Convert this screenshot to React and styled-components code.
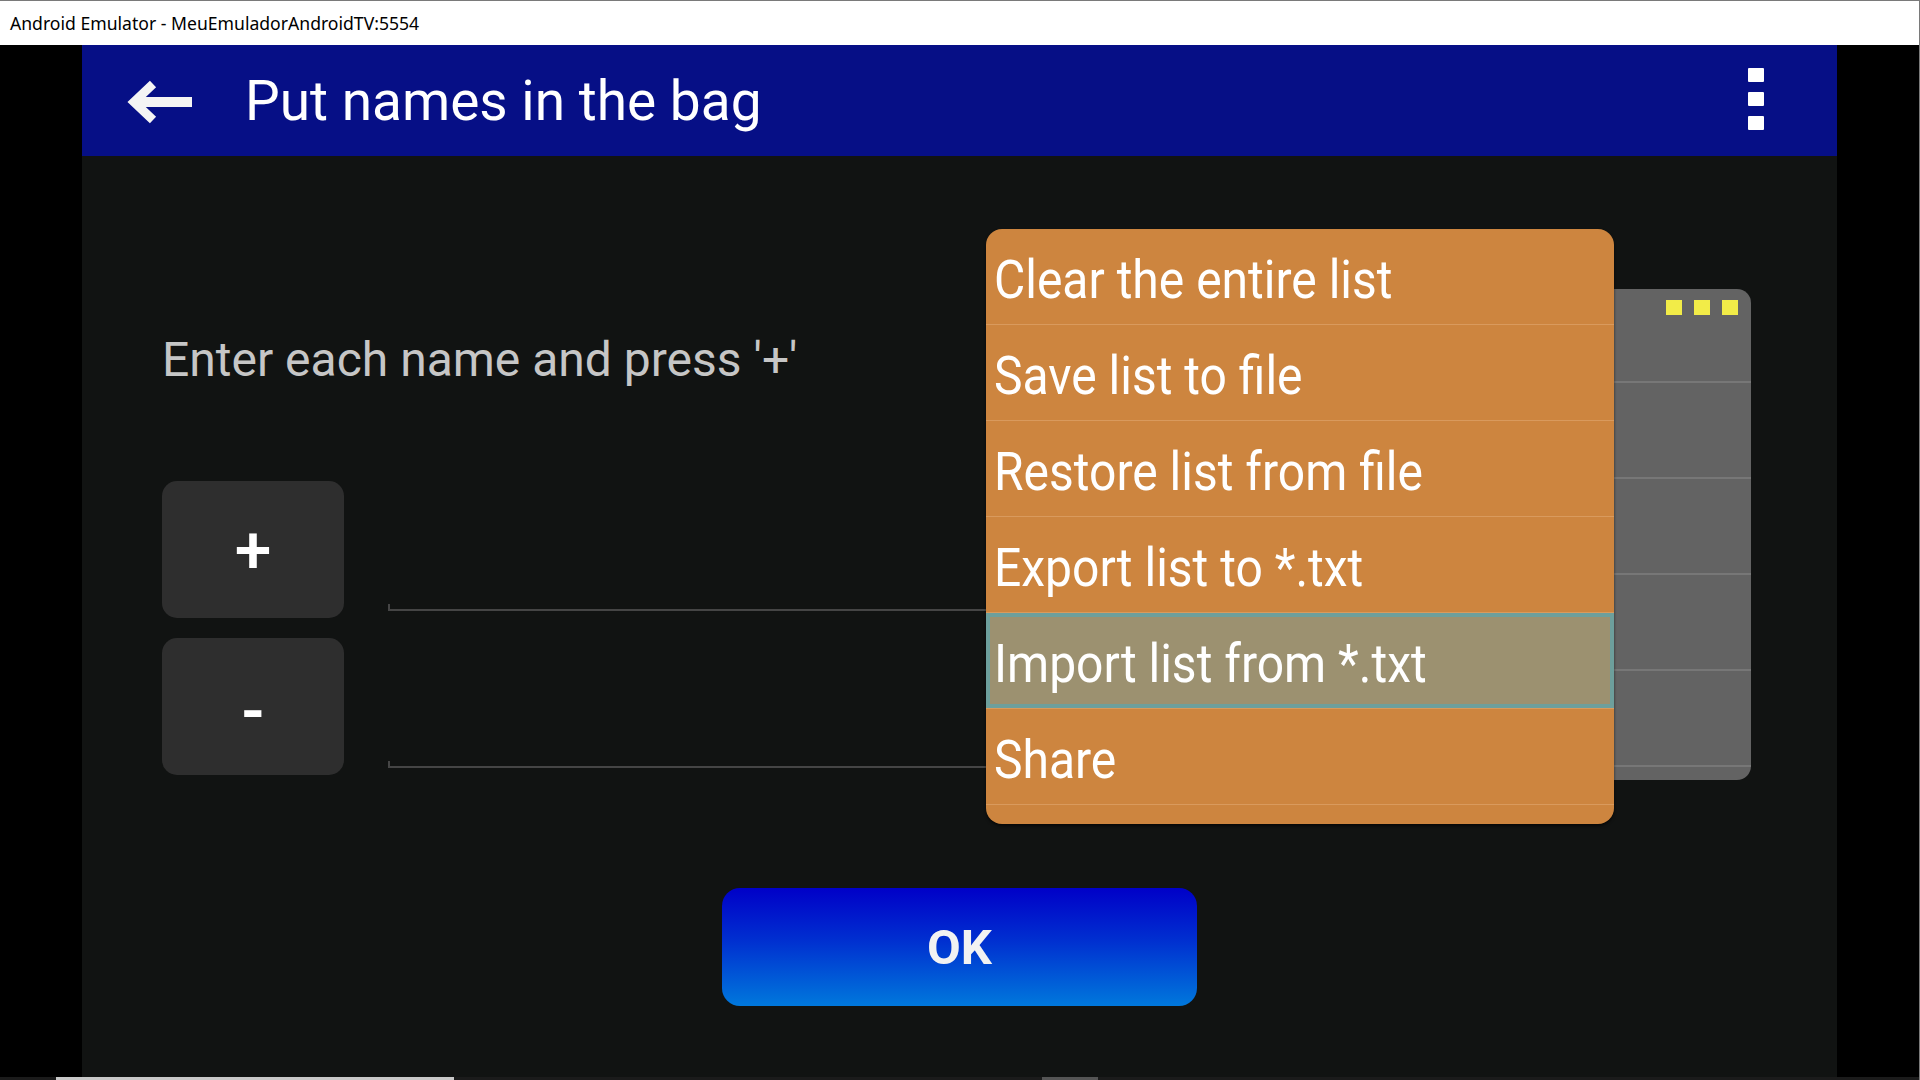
import React from "react";
import styled, { createGlobalStyle } from "styled-components";

const GlobalStyle = createGlobalStyle`
  html, body {
    margin: 0;
    padding: 0;
    background: #000;
  }
  body {
    font-family: Roboto, "Noto Sans", sans-serif;
  }
  * {
    box-sizing: border-box;
  }
`;

const menuItems = [
  "Clear the entire list",
  "Save list to file",
  "Restore list from file",
  "Export list to *.txt",
  "Import list from *.txt",
  "Share",
];

export default function App() {
  return (
    <>
      <GlobalStyle />
      <Window>
        <TitleBar>Android Emulator - MeuEmuladorAndroidTV:5554</TitleBar>
        <Desk>
          <Screen>
            <AppBar>
              <BackArrow width="65" height="44" viewBox="0 0 65 44">
                <polyline
                  points="26,4 7,22 26,40"
                  fill="none"
                  stroke="#f4f4f4"
                  strokeWidth="9"
                  strokeLinejoin="miter"
                />
                <line x1="8" y1="22" x2="65" y2="22" stroke="#f4f4f4" strokeWidth="10" />
              </BackArrow>
              <Title>Put names in the bag</Title>
              <Dots>
                <Dot />
                <Dot />
                <Dot />
              </Dots>
            </AppBar>
            <Content>
              <Prompt>Enter each name and press '+'</Prompt>
              <EntryRow>
                <ButtonCol>
                  <SquareButton>+</SquareButton>
                  <SquareButton $minus>-</SquareButton>
                </ButtonCol>
                <FieldCol>
                  <Field>
                    <Underline />
                  </Field>
                  <Field>
                    <Underline />
                  </Field>
                </FieldCol>
              </EntryRow>
              <OkButton>OK</OkButton>

              <BackPanel>
                <PanelRow>
                  <YellowDots>
                    <YellowDot />
                    <YellowDot />
                    <YellowDot />
                  </YellowDots>
                </PanelRow>
                <PanelRow />
                <PanelRow />
                <PanelRow />
                <PanelRow />
              </BackPanel>

              <Menu>
                {menuItems.map((item, i) => (
                  <MenuItem key={item} $active={i === 4}>
                    <ItemLabel>{item}</ItemLabel>
                  </MenuItem>
                ))}
              </Menu>
            </Content>
          </Screen>
        </Desk>
        <Strip>
          <StripPart $w={56} $c="#1b1b1b" />
          <StripPart $w={398} $c="#c9c9c9" />
          <StripPart $w={588} $c="#1b1b1b" />
          <StripPart $w={56} $c="#555555" />
        </Strip>
      </Window>
    </>
  );
}

const Window = styled.div`
  width: 1920px;
  height: 1080px;
  display: flex;
  flex-direction: column;
  border-top: 1px solid #7a7a7a;
  border-right: 1px solid #7a7a7a;
  background: #000;
  overflow: hidden;
`;

const TitleBar = styled.div`
  height: 44px;
  flex-shrink: 0;
  background: #fff;
  display: flex;
  align-items: center;
  padding-left: 10px;
  font-family: "Noto Sans", "Open Sans", sans-serif;
  font-size: 17.6px;
  color: #000;
`;

const Desk = styled.div`
  flex: 1;
  display: flex;
  padding-left: 82px;
  min-height: 0;
`;

const Screen = styled.div`
  width: 1755px;
  display: flex;
  flex-direction: column;
`;

const AppBar = styled.div`
  height: 111px;
  flex-shrink: 0;
  background: #060f86;
  display: flex;
  align-items: center;
  padding-left: 45px;
  padding-right: 73px;
`;

const BackArrow = styled.svg`
  display: block;
  margin-top: 2px;
`;

const Title = styled.h1`
  margin: 0 0 0 53px;
  font-family: Roboto, sans-serif;
  font-weight: 400;
  font-size: 55px;
  color: #fff;
`;

const Dots = styled.div`
  margin-left: auto;
  display: flex;
  flex-direction: column;
  gap: 10px;
  margin-bottom: 3px;
`;

const Dot = styled.span`
  width: 16px;
  height: 14px;
  background: #fff;
  border-radius: 1px;
`;

const Content = styled.div`
  flex: 1;
  position: relative;
  background: #111312;
  display: flex;
  flex-direction: column;
  padding-left: 80px;
`;

const Prompt = styled.div`
  margin-top: 174px;
  height: 60px;
  line-height: 60px;
  font-size: 48px;
  color: #c6c6c6;
`;

const EntryRow = styled.div`
  margin-top: 91px;
  display: flex;
  gap: 44px;
`;

const ButtonCol = styled.div`
  display: flex;
  flex-direction: column;
  gap: 20px;
`;

const SquareButton = styled.div`
  width: 182px;
  height: 137px;
  border-radius: 15px;
  background: #2e2e2e;
  color: #fff;
  display: flex;
  align-items: center;
  justify-content: center;
  font-size: ${(p) => (p.$minus ? "62px" : "66px")};
  font-weight: ${(p) => (p.$minus ? 700 : 500)};
  padding-top: ${(p) => (p.$minus ? "8px" : "2px")};
`;

const FieldCol = styled.div`
  display: flex;
  flex-direction: column;
  gap: 20px;
`;

const Field = styled.div`
  width: 1300px;
  height: 137px;
  display: flex;
  align-items: flex-end;
  padding-bottom: 7px;
`;

const Underline = styled.div`
  width: 100%;
  height: 7px;
  border-left: 2px solid #454545;
  border-bottom: 2px solid #454545;
`;

const OkButton = styled.div`
  align-self: center;
  margin-left: -80px;
  margin-top: 113px;
  width: 475px;
  height: 118px;
  border-radius: 18px;
  background: linear-gradient(180deg, #0000c8 0%, #0030d0 45%, #0078dc 100%);
  color: #f2f2f2;
  display: flex;
  align-items: center;
  justify-content: center;
  font-size: 49px;
  font-weight: 700;
`;

const BackPanel = styled.div`
  position: absolute;
  top: 133px;
  left: 1268px;
  width: 401px;
  height: 491px;
  background: #636363;
  border-radius: 14px;
  overflow: hidden;
  display: flex;
  flex-direction: column;
`;

const PanelRow = styled.div`
  height: 96px;
  flex-shrink: 0;
  border-bottom: 2px solid #777;
  display: flex;
  justify-content: flex-end;
  align-items: flex-start;
  &:first-child {
    height: 94px;
  }
`;

const YellowDots = styled.div`
  display: flex;
  gap: 12px;
  margin-top: 11px;
  margin-right: 13px;
`;

const YellowDot = styled.span`
  width: 16px;
  height: 15px;
  background: #f2ec48;
`;

const Menu = styled.div`
  position: absolute;
  top: 73px;
  left: 904px;
  width: 628px;
  height: 595px;
  background: #cd853f;
  border-radius: 16px;
  overflow: hidden;
  box-shadow: 0 2px 3px rgba(0, 0, 0, 0.6);
  display: flex;
  flex-direction: column;
`;

const MenuItem = styled.div`
  height: 96px;
  flex-shrink: 0;
  border-bottom: 1px solid #d99a5d;
  display: flex;
  align-items: center;
  padding-left: 8px;
  padding-top: 5px;
  font-size: 48px;
  color: #fff;
  background: ${(p) => (p.$active ? "#9c9170" : "transparent")};
  box-shadow: ${(p) => (p.$active ? "inset 0 0 0 4px #6d9f9c" : "none")};
`;

const ItemLabel = styled.span`
  display: inline-block;
  transform: scaleY(1.1);
`;

const Strip = styled.div`
  height: 3px;
  flex-shrink: 0;
  display: flex;
  background: #1b1b1b;
`;

const StripPart = styled.span`
  width: ${(p) => p.$w}px;
  background: ${(p) => p.$c};
`;
